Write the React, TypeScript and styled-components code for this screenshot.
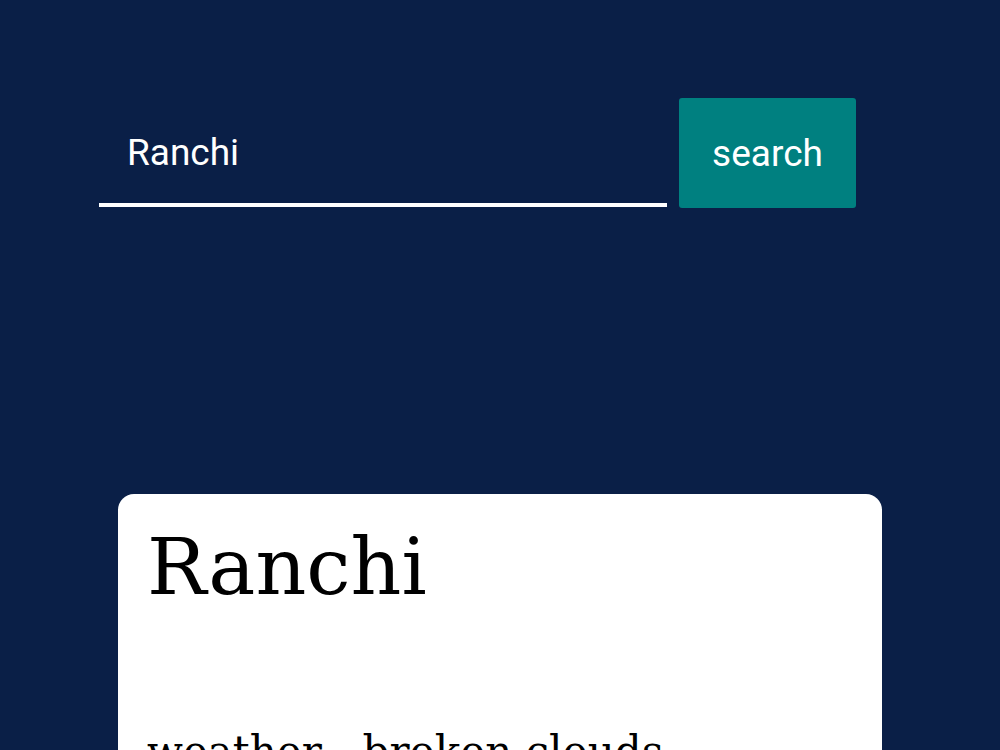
import React, { useState } from 'react';
import styled, { createGlobalStyle } from 'styled-components';

const GlobalStyle = createGlobalStyle`
    html, body {
        margin: 0;
        padding: 0;
        background: #0a1f47;
    }
    body {
        font-family: 'DejaVu Serif', serif;
    }
`;

const Page = styled.div`
    min-height: 100vh;
    padding-top: 98px;
    box-sizing: border-box;
`;

const SearchForm = styled.form`
    display: flex;
    align-items: flex-start;
    gap: 12px;
    padding-left: 99px;
`;

const SearchInput = styled.input`
    width: 568px;
    height: 109px;
    box-sizing: border-box;
    padding: 3px 28px 0;
    background: transparent;
    border: none;
    border-bottom: 4px solid #ffffff;
    outline: none;
    color: #ffffff;
    font-family: Roboto, sans-serif;
    font-size: 37px;
`;

const SearchButton = styled.button`
    width: 177px;
    height: 110px;
    background: #008080;
    border: none;
    border-radius: 3px;
    color: #ffffff;
    font-family: Roboto, sans-serif;
    font-size: 37px;
    cursor: pointer;
`;

const Card = styled.div`
    width: 764px;
    margin: 286px auto 0;
    padding: 27px 29px;
    box-sizing: border-box;
    background: #ffffff;
    border-radius: 16px;
    min-height: 400px;
`;

const City = styled.h1`
    margin: 0;
    font-size: 79px;
    font-weight: normal;
    color: #000000;
`;

const Detail = styled.p`
    margin: 114px 0 0;
    font-size: 42px;
    color: #000000;
`;

export default function App() {
    const [query, setQuery] = useState('Ranchi');

    return (
        <Page>
            <GlobalStyle />
            <SearchForm onSubmit={e => e.preventDefault()}>
                <SearchInput value={query} onChange={e => setQuery(e.target.value)} />
                <SearchButton type="submit">search</SearchButton>
            </SearchForm>
            <Card>
                <City>Ranchi</City>
                <Detail>weather - broken clouds</Detail>
                <Detail>temperature - 24°C</Detail>
            </Card>
        </Page>
    );
}
